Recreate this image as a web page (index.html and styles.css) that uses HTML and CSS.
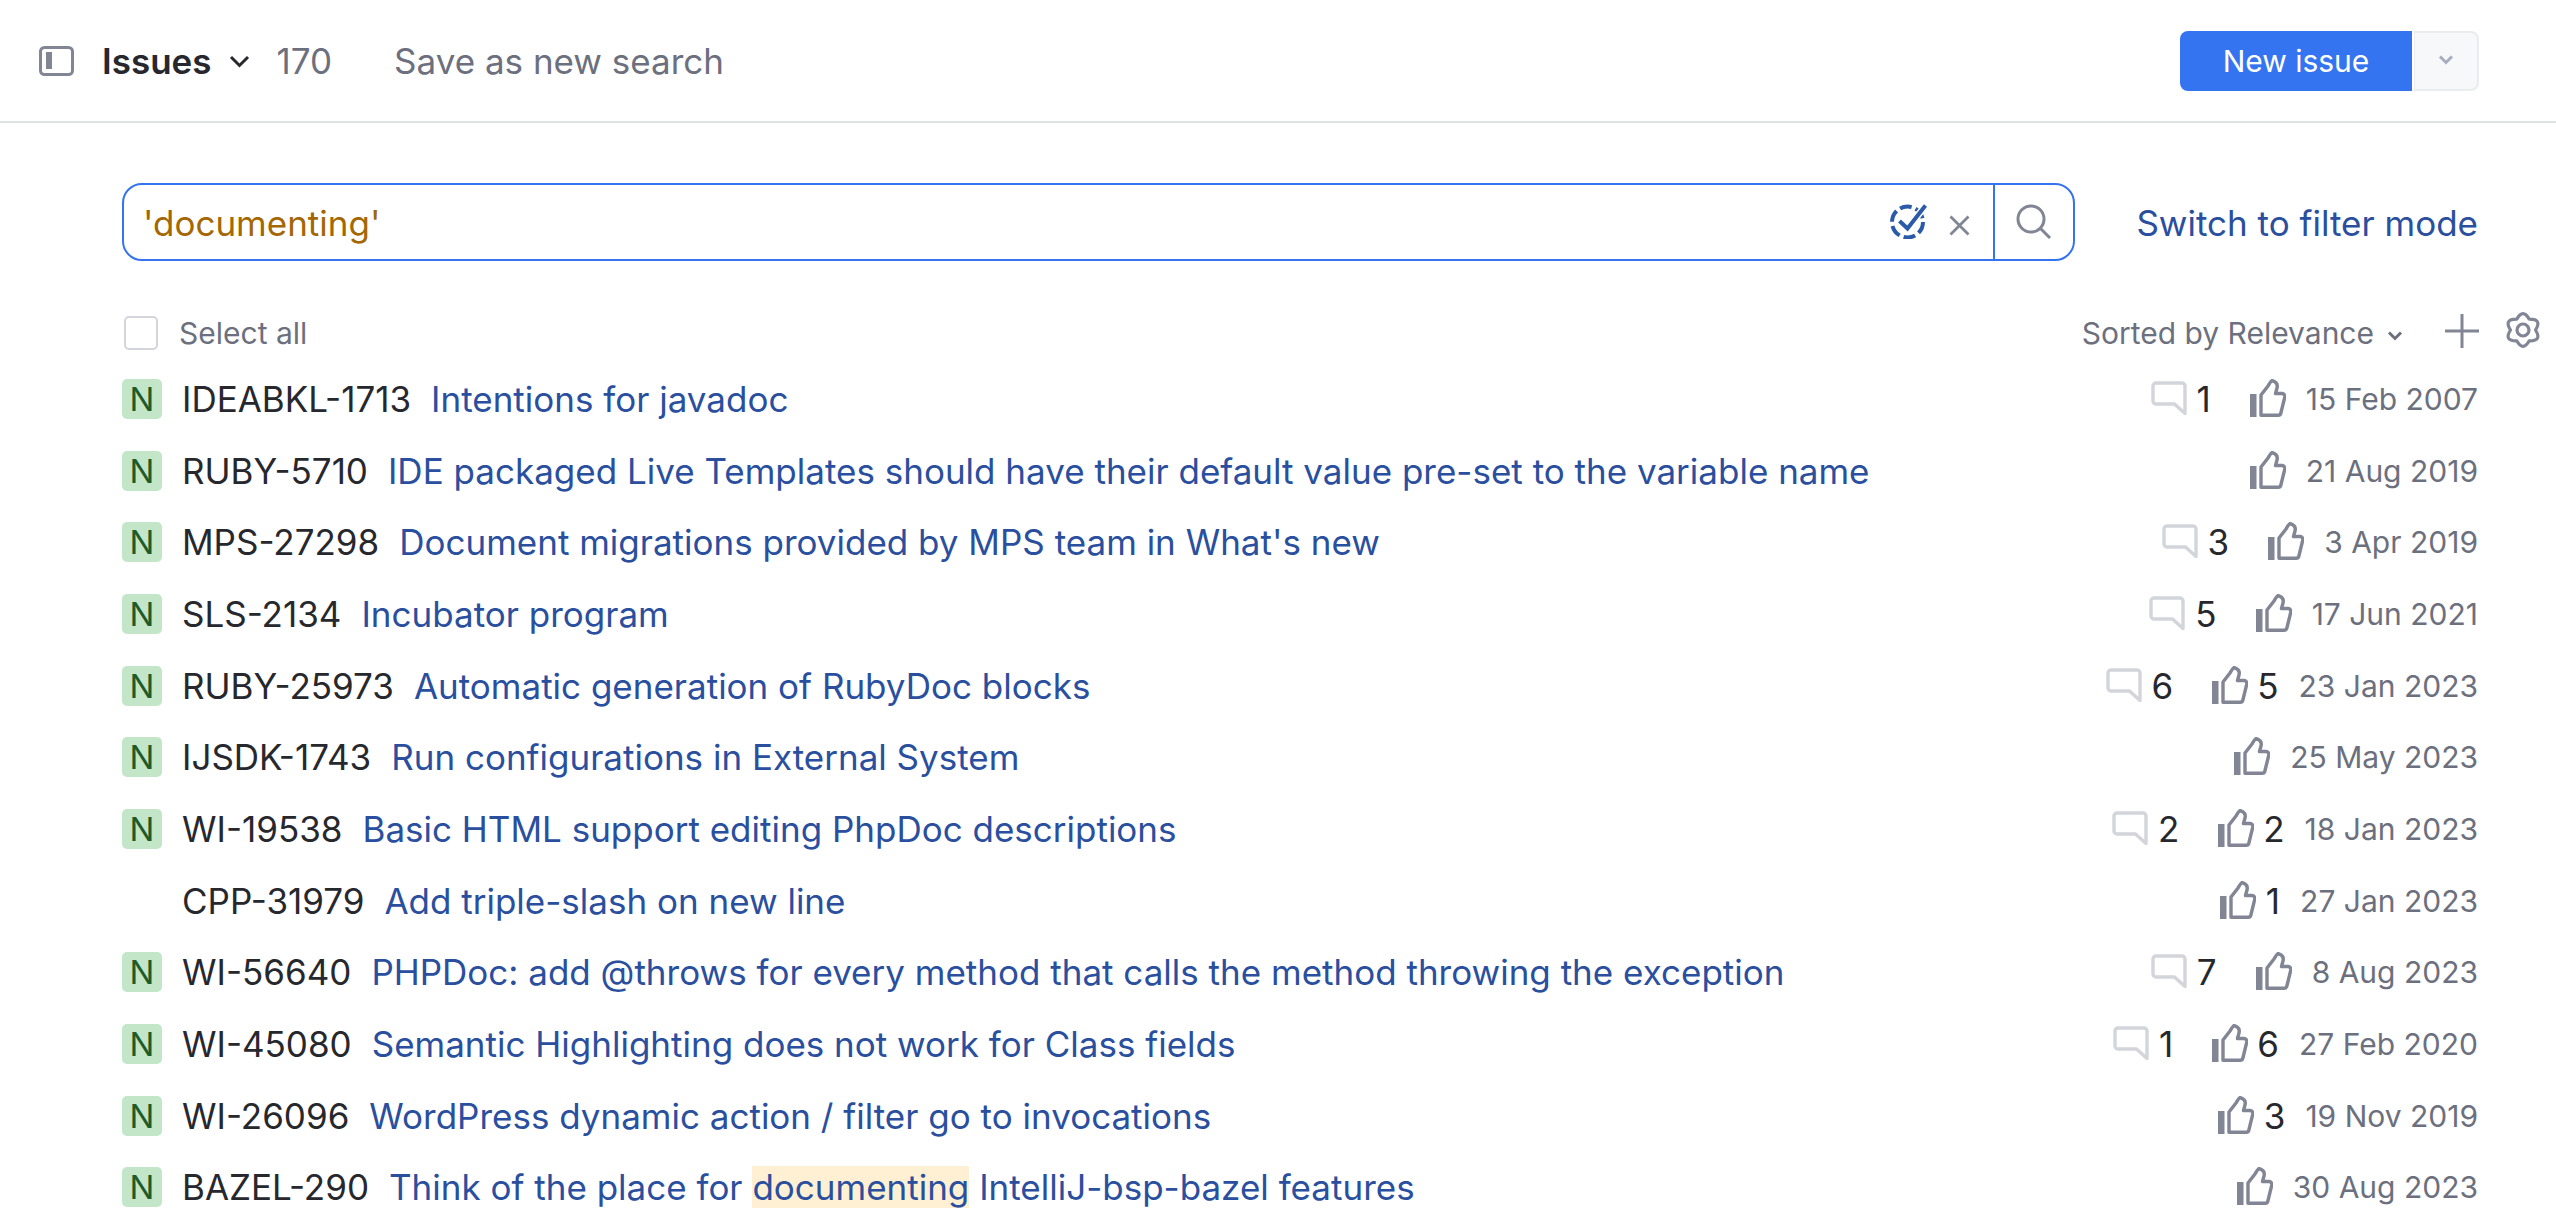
FILE: index.html
```html
<!DOCTYPE html>
<html lang="en">
<head>
<meta charset="utf-8">
<title>Issues</title>
<link rel="stylesheet" href="styles.css">
</head>
<body>
<svg class="defs" width="0" height="0" aria-hidden="true">
  <symbol id="comment" viewBox="0 0 36 36"><path d="M5 2h26a3 3 0 0 1 3 3v27.500L23.500 23H5a3 3 0 0 1-3-3V5a3 3 0 0 1 3-3z" fill="none" stroke="#d3d5db" stroke-width="3.400" stroke-linejoin="round"/></symbol>
  <symbol id="thumb" viewBox="0 0 36 38"><path d="M0 15h6.500v23H0z" fill="#818594"/><path d="M11 16 18 7c1.200-1.800 2-4 4-5.500 3.500 1 6 3.500 5 7.500l-1.500 5.500H32a3 3 0 0 1 2.700 4L31 33.500a3 3 0 0 1-3 2.700H11z" fill="none" stroke="#818594" stroke-width="3.400" stroke-linejoin="round"/></symbol>
</svg>
<header class="topbar">
  <div class="topbar-left">
    <svg class="panel-icon" viewBox="0 0 35 30"><rect x="1.500" y="1.500" width="32" height="27" rx="4" fill="none" stroke="#818594" stroke-width="3"/><rect x="7" y="6" width="6" height="17" fill="#818594"/></svg>
    <span class="issues-title">Issues</span>
    <svg class="title-chev" viewBox="0 0 21 13"><path d="M2 2l8.500 8.500L19 2" fill="none" stroke="#27282e" stroke-width="3"/></svg>
    <span class="count">170</span>
    <span class="save">Save as new search</span>
  </div>
  <div class="new-issue">
    <button class="btn-primary">New issue</button>
    <button class="btn-more"><svg viewBox="0 0 16 10"><path d="M2 2l6 6 6-6" fill="none" stroke="#a8adbd" stroke-width="3"/></svg></button>
  </div>
</header>
<main class="content">
  <div class="search-row">
    <div class="search-box">
      <span class="query">'documenting'</span>
      <svg class="check-icon" viewBox="0 0 37 35"><circle cx="17.500" cy="18" r="15.500" fill="none" stroke="#2a5aa8" stroke-width="4" stroke-dasharray="12 4.200"/><path d="M8 15.500l9.500 9L35.500 1.500" fill="none" stroke="#fff" stroke-width="7"/><path d="M9.500 17l8 7.500L35.500 1.500" fill="none" stroke="#2a5aa8" stroke-width="4"/></svg>
      <svg class="clear-icon" viewBox="0 0 21 21"><path d="M1.500 1.500l18 18M19.500 1.500l-18 18" fill="none" stroke="#818594" stroke-width="2.800"/></svg>
      <span class="search-btn"><svg viewBox="0 0 36 36"><circle cx="15" cy="15" r="13" fill="none" stroke="#818594" stroke-width="3"/><path d="M24 24l10 10" fill="none" stroke="#818594" stroke-width="3"/></svg></span>
    </div>
    <a class="switch">Switch to filter mode</a>
  </div>
  <div class="list-head">
    <label class="select-all"><span class="checkbox"></span>Select all</label>
    <div class="list-tools">
      <span class="sorted">Sorted by Relevance</span>
      <svg class="sort-chev" viewBox="0 0 16 10"><path d="M2 2l6 6 6-6" fill="none" stroke="#6c707e" stroke-width="3"/></svg>
      <svg class="plus" viewBox="0 0 34 34"><path d="M17 0v34M0 17h34" stroke="#818594" stroke-width="3"/></svg>
      <svg class="gear" viewBox="0 0 36 36"><path d="M24.250 7.200Q18-4 11.750 7.200Q-1.500 7 5.500 18Q-1.500 29 11.750 28.800Q18 40 24.250 28.800Q37.500 29 30.500 18Q37.500 7 24.250 7.200z" fill="none" stroke="#818594" stroke-width="3.200" stroke-linejoin="round"/><circle cx="18" cy="18" r="6" fill="none" stroke="#818594" stroke-width="3.200"/></svg>
    </div>
  </div>
  <ul class="issues">
    <li class="issue"><span class="badge">N</span><span class="id">IDEABKL-1713</span><a class="name">Intentions for javadoc</a>
      <span class="meta"><span class="stat"><svg class="ic-comment"><use href="#comment"/></svg><b>1</b></span><span class="stat"><svg class="ic-thumb"><use href="#thumb"/></svg></span><time>15 Feb 2007</time></span></li>
    <li class="issue"><span class="badge">N</span><span class="id">RUBY-5710</span><a class="name">IDE packaged Live Templates should have their default value pre-set to the variable name</a>
      <span class="meta"><span class="stat"><svg class="ic-thumb"><use href="#thumb"/></svg></span><time>21 Aug 2019</time></span></li>
    <li class="issue"><span class="badge">N</span><span class="id">MPS-27298</span><a class="name">Document migrations provided by MPS team in What's new</a>
      <span class="meta"><span class="stat"><svg class="ic-comment"><use href="#comment"/></svg><b>3</b></span><span class="stat"><svg class="ic-thumb"><use href="#thumb"/></svg></span><time>3 Apr 2019</time></span></li>
    <li class="issue"><span class="badge">N</span><span class="id">SLS-2134</span><a class="name">Incubator program</a>
      <span class="meta"><span class="stat"><svg class="ic-comment"><use href="#comment"/></svg><b>5</b></span><span class="stat"><svg class="ic-thumb"><use href="#thumb"/></svg></span><time>17 Jun 2021</time></span></li>
    <li class="issue"><span class="badge">N</span><span class="id">RUBY-25973</span><a class="name">Automatic generation of RubyDoc blocks</a>
      <span class="meta"><span class="stat"><svg class="ic-comment"><use href="#comment"/></svg><b>6</b></span><span class="stat"><svg class="ic-thumb"><use href="#thumb"/></svg><b>5</b></span><time>23 Jan 2023</time></span></li>
    <li class="issue"><span class="badge">N</span><span class="id">IJSDK-1743</span><a class="name">Run configurations in External System</a>
      <span class="meta"><span class="stat"><svg class="ic-thumb"><use href="#thumb"/></svg></span><time>25 May 2023</time></span></li>
    <li class="issue"><span class="badge">N</span><span class="id">WI-19538</span><a class="name">Basic HTML support editing PhpDoc descriptions</a>
      <span class="meta"><span class="stat"><svg class="ic-comment"><use href="#comment"/></svg><b>2</b></span><span class="stat"><svg class="ic-thumb"><use href="#thumb"/></svg><b>2</b></span><time>18 Jan 2023</time></span></li>
    <li class="issue"><span class="badge badge-none"></span><span class="id">CPP-31979</span><a class="name">Add triple-slash on new line</a>
      <span class="meta"><span class="stat"><svg class="ic-thumb"><use href="#thumb"/></svg><b>1</b></span><time>27 Jan 2023</time></span></li>
    <li class="issue"><span class="badge">N</span><span class="id">WI-56640</span><a class="name">PHPDoc: add @throws for every method that calls the method throwing the exception</a>
      <span class="meta"><span class="stat"><svg class="ic-comment"><use href="#comment"/></svg><b>7</b></span><span class="stat"><svg class="ic-thumb"><use href="#thumb"/></svg></span><time>8 Aug 2023</time></span></li>
    <li class="issue"><span class="badge">N</span><span class="id">WI-45080</span><a class="name">Semantic Highlighting does not work for Class fields</a>
      <span class="meta"><span class="stat"><svg class="ic-comment"><use href="#comment"/></svg><b>1</b></span><span class="stat"><svg class="ic-thumb"><use href="#thumb"/></svg><b>6</b></span><time>27 Feb 2020</time></span></li>
    <li class="issue"><span class="badge">N</span><span class="id">WI-26096</span><a class="name">WordPress dynamic action / filter go to invocations</a>
      <span class="meta"><span class="stat"><svg class="ic-thumb"><use href="#thumb"/></svg><b>3</b></span><time>19 Nov 2019</time></span></li>
    <li class="issue"><span class="badge">N</span><span class="id">BAZEL-290</span><a class="name">Think of the place for <mark>documenting</mark> IntelliJ-bsp-bazel features</a>
      <span class="meta"><span class="stat"><svg class="ic-thumb"><use href="#thumb"/></svg></span><time>30 Aug 2023</time></span></li>
  </ul>
</main>
</body>
</html>
```
FILE: styles.css
```css
* { box-sizing: border-box; }
html, body { margin: 0; padding: 0; height: 100%; overflow: hidden; background: #fff; }
body { font-family: Inter, "Liberation Sans", sans-serif; font-size: 22.8px; color: #27282e; }
.defs { position: absolute; }
.topbar { height: 123px; border-bottom: 2px solid #dfe1e5; display: flex; align-items: center; justify-content: space-between; padding: 0 77px 0 39px; }
.topbar-left { display: flex; align-items: center; }
.panel-icon { width: 35px; height: 30px; margin-right: 28px; }
.issues-title { font-size: 35px; font-weight: 600; color: #27282e; }
.title-chev { width: 21px; height: 13px; margin-left: 17px; margin-right: 27px; margin-top: 2px; }
.count { font-size: 35px; color: #6c707e; margin-right: 62px; }
.save { font-size: 35px; color: #6c707e; }
.new-issue { display: flex; height: 60px; gap: 2px; }
.btn-primary { width: 232px; border: 0; border-radius: 8px 0 0 8px; background: #3574f0; color: #fff; font: 400 30px Inter, sans-serif; padding: 0; }
.btn-more { width: 65px; border: 2px solid #ebecf0; border-left-width: 1px; border-radius: 0 8px 8px 0; background: #f7f8fa; display: flex; align-items: center; justify-content: center; padding: 0; }
.btn-more svg { width: 16px; height: 11px; margin-top: -2px; }
.content { padding: 60px 78px 0 122px; }
.search-row { display: flex; align-items: center; justify-content: space-between; height: 78px; }
.search-box { width: 1953px; height: 78px; border: 2px solid #3574f0; border-radius: 20px; display: flex; align-items: center; padding-left: 19px; }
.query { flex: 1; font-size: 35px; color: #a46704; padding-top: 2px; }
.check-icon { width: 37px; height: 35px; margin-right: 22px; margin-top: -1px; }
.clear-icon { width: 21px; height: 21px; margin-right: 23px; margin-top: 6px; }
.search-btn { width: 80px; height: 100%; border-left: 2px solid #3574f0; display: flex; align-items: center; justify-content: center; }
.search-btn svg { width: 36px; height: 36px; }
.switch { font-size: 35px; color: #2a4f9e; padding-top: 2px; }
.list-head { display: flex; align-items: center; justify-content: space-between; height: 48px; margin-top: 48px; }
.select-all { display: flex; align-items: center; font-size: 30px; color: #6c707e; padding-left: 2px; }
.checkbox { width: 34px; height: 34px; border: 2px solid #d3d5db; border-radius: 5px; margin-right: 21px; margin-top: -1px; }
.list-tools { display: flex; align-items: center; font-size: 30px; color: #6c707e; margin-right: -63px; }
.sort-chev { width: 16px; height: 11px; margin-left: 13px; margin-right: 42px; margin-top: 4px; }
.plus { width: 34px; height: 34px; margin-right: 26px; margin-top: -4px; }
.gear { width: 36px; height: 36px; margin-top: -6px; }
.issues { list-style: none; margin: 0; padding: 0; margin-top: 6px; }
.issue { display: flex; align-items: center; height: 71.700px; font-size: 35px; white-space: nowrap; }
.badge { width: 40px; height: 40px; border-radius: 5px; background: #c3e6c8; color: #1e5b2a; font-size: 33px; display: flex; align-items: center; justify-content: center; margin-right: 20px; flex: none; }
.badge-none { background: none; }
.id { color: #27282e; margin-right: 20px; }
.name { color: #2a4f9e; }
mark { background: #fff0d3; color: inherit; }
.meta { margin-left: auto; display: flex; align-items: center; }
.stat { display: flex; align-items: center; margin-right: 20px; }
.stat b { font-weight: 400; color: #27282e; margin-left: 10px; }
.stat + .stat { margin-left: 19px; }
.stat + .stat b { margin-left: 9px; }
.ic-comment { width: 36px; height: 36px; }
.ic-thumb { width: 36px; height: 38px; margin-top: -2px; }
time { font-size: 30px; color: #6c707e; }
```
